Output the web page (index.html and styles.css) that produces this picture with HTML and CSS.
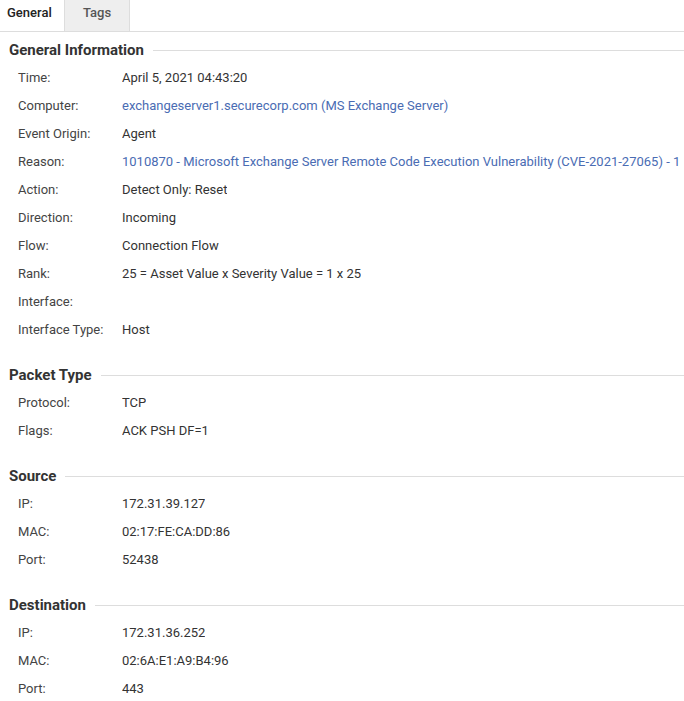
FILE: index.html
```html
<!DOCTYPE html>
<html>
<head>
<meta charset="utf-8">
<link rel="stylesheet" href="styles.css">
</head>
<body>
<div class="tabs">
  <div class="tab active">General</div>
  <div class="tab">Tags</div>
</div>
<div class="content">
  <section class="section">
    <h2 class="section-title">General Information</h2>
    <div class="rows">
      <div class="row"><span class="label">Time:</span><span class="value">April 5, 2021 04:43:20</span></div>
      <div class="row"><span class="label">Computer:</span><span class="value link">exchangeserver1.securecorp.com (MS Exchange Server)</span></div>
      <div class="row"><span class="label">Event Origin:</span><span class="value">Agent</span></div>
      <div class="row"><span class="label">Reason:</span><span class="value link">1010870 - Microsoft Exchange Server Remote Code Execution Vulnerability (CVE-2021-27065) - 1</span></div>
      <div class="row"><span class="label">Action:</span><span class="value">Detect Only: Reset</span></div>
      <div class="row"><span class="label">Direction:</span><span class="value">Incoming</span></div>
      <div class="row"><span class="label">Flow:</span><span class="value">Connection Flow</span></div>
      <div class="row"><span class="label">Rank:</span><span class="value">25 = Asset Value x Severity Value = 1 x 25</span></div>
      <div class="row"><span class="label">Interface:</span><span class="value"></span></div>
      <div class="row"><span class="label">Interface Type:</span><span class="value">Host</span></div>
    </div>
  </section>
  <section class="section">
    <h2 class="section-title">Packet Type</h2>
    <div class="rows">
      <div class="row"><span class="label">Protocol:</span><span class="value">TCP</span></div>
      <div class="row"><span class="label">Flags:</span><span class="value">ACK PSH DF=1</span></div>
    </div>
  </section>
  <section class="section">
    <h2 class="section-title">Source</h2>
    <div class="rows">
      <div class="row"><span class="label">IP:</span><span class="value">172.31.39.127</span></div>
      <div class="row"><span class="label">MAC:</span><span class="value">02:17:FE:CA:DD:86</span></div>
      <div class="row"><span class="label">Port:</span><span class="value">52438</span></div>
    </div>
  </section>
  <section class="section">
    <h2 class="section-title">Destination</h2>
    <div class="rows">
      <div class="row"><span class="label">IP:</span><span class="value">172.31.36.252</span></div>
      <div class="row"><span class="label">MAC:</span><span class="value">02:6A:E1:A9:B4:96</span></div>
      <div class="row"><span class="label">Port:</span><span class="value">443</span></div>
    </div>
  </section>
</div>
</body>
</html>
```
FILE: styles.css
```css
html, body {
  margin: 0;
  padding: 0;
  background: #fff;
}
body {
  font-family: Roboto, "Liberation Sans", sans-serif;
  font-size: 13px;
  color: #333;
  width: 684px;
  overflow: hidden;
}
.tabs {
  display: flex;
  height: 31px;
  border-bottom: 1px solid #ddd;
}
.tab {
  width: 65px;
  box-sizing: border-box;
  line-height: 26px;
  text-align: center;
  font-weight: 500;
  font-size: 13px;
  color: #555;
  background: #eee;
  border-right: 1px solid #ddd;
}
.tab.active {
  background: #fff;
  color: #222;
  border-right: 1px solid #ddd;
  text-align: left;
  padding-left: 7px;
}
.content {
  padding: 0 0 0 9px;
}
.section {
  margin-bottom: 14px;
}
.section-title {
  display: flex;
  align-items: center;
  margin: 0;
  padding-top: 6px;
  line-height: 24px;
  font-size: 15px;
  font-weight: bold;
  color: #333;
}
.section-title::after {
  content: "";
  flex: 1;
  height: 1px;
  background: #ddd;
  margin-left: 9px;
}
.rows {
  margin-top: 1px;
  padding-left: 9px;
}
.row {
  display: flex;
  height: 28px;
  align-items: center;
  white-space: nowrap;
}
.label {
  width: 104px;
  flex: none;
  color: #444;
}
.value {
  color: #333;
  overflow: hidden;
}
.value.link {
  color: #4a6cb3;
}
```
